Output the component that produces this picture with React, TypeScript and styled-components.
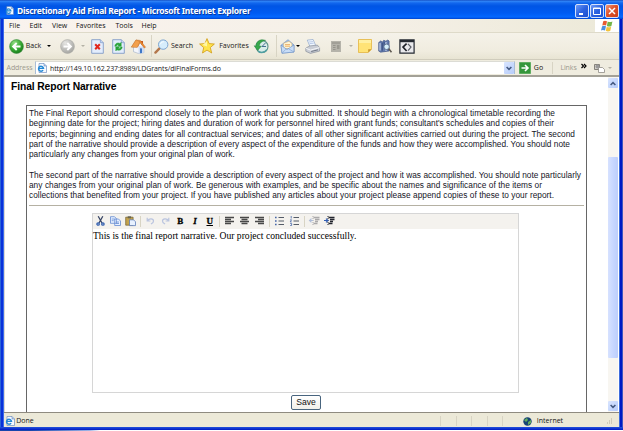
import React from "react";
import styled, { createGlobalStyle } from "styled-components";

const Global = createGlobalStyle`
  * { box-sizing: border-box; }
  body { margin: 0; overflow: hidden; background: #fff; }
  svg { display: block; flex: none; overflow: visible; }
`;

const ui = `"Open Sans", "Noto Sans", sans-serif`;

const Page = styled.div`
  width: 623px;
  height: 431px;
  display: flex;
  flex-direction: column;
  background: linear-gradient(90deg, #1746ad 0 30px, #9eb6e8 90px, #fff 100px);
`;
const Win = styled.div`
  height: 430px;
  display: flex;
  flex-direction: column;
  background: linear-gradient(90deg, #2a62d8 0 1px, #0831d9 1px 3px, #3b6be8 3px 4px, #ece9d8 4px 619px, #3d6cdd 619px 620px, #0019c4 620px 622px, #4055c0 622px);
`;
const TitleBar = styled.div`
  height: 19px;
  flex: none;
  display: flex;
  align-items: center;
  padding: 2px 4px 0 5px;
  background: linear-gradient(#0b3fb5 0, #3488f8 1px, #1267ee 3px, #0055e5 6px, #005bf2 13px, #0468ff 17px, #0043cf 19px);
`;
const Title = styled.div`
  flex: 1;
  margin-left: 3px;
  white-space: nowrap;
  color: #fff;
  font: 700 8.5px/14px "Noto Sans", "Open Sans", sans-serif;
  letter-spacing: -0.27px;
  text-shadow: 1px 1px 0 #0a3a9c;
`;
const WinButton = styled.div<{ $close?: boolean }>`
  width: 14px;
  height: 14px;
  margin-left: 1px;
  border: 1px solid #d5e1fb;
  border-radius: 2px;
  background: ${(p) =>
    p.$close
      ? "linear-gradient(135deg, #ee9a7c, #e0522b 45%, #c8401c)"
      : "linear-gradient(135deg, #6d9af5, #2c62e0 50%, #1c4fd0)"};
`;
const MenuBar = styled.div`
  height: 14px;
  flex: none;
  display: flex;
  margin: 0 4px;
  background: linear-gradient(90deg, #f9f3ee, #f5f0e7 60%, #ece9d8);
  border-bottom: 1px solid #dedac9;
`;
const MenuItem = styled.div<{ $w: number; $ls?: number }>`
  width: ${(p) => p.$w}px;
  font: 7px/14px ${ui};
  letter-spacing: ${(p) => p.$ls ?? 0}px;
  color: #111;
  white-space: nowrap;
`;
const Brand = styled.div`
  width: 24px;
  margin-left: auto;
  display: flex;
  align-items: center;
  justify-content: center;
  background: #fff;
`;
const Toolbar = styled.div`
  height: 27px;
  flex: none;
  display: flex;
  align-items: center;
  margin: 0 4px;
  background: linear-gradient(#f5f2e9, #f0ecdf 70%, #e8e4d3);
  border-bottom: 1px solid #d0ccbc;
`;
const Slot = styled.div<{ $w: number; $ls?: number; $dim?: boolean }>`
  width: ${(p) => p.$w}px;
  height: 100%;
  flex: none;
  display: flex;
  align-items: center;
  justify-content: center;
  font: 7px/14px ${ui};
  letter-spacing: ${(p) => p.$ls ?? 0}px;
  color: ${(p) => (p.$dim ? "#9c998d" : "#151515")};
  white-space: nowrap;
`;
const Rule = styled.i<{ $h: number }>`
  width: 1px;
  height: ${(p) => p.$h}px;
  background: #d8d4c4;
`;
const AddressBar = styled.div`
  height: 15px;
  flex: none;
  display: flex;
  align-items: center;
  margin: 0 4px;
  background: #efecdf;
`;
const AddressField = styled.div`
  width: 480px;
  height: 13px;
  display: flex;
  align-items: center;
  border: 1px solid #a9bdd6;
  border-top-color: #dcdcd5;
  border-bottom: 0;
  background: #fff;
  padding-left: 1px;
`;
const Url = styled.div`
  flex: 1;
  margin-left: 3px;
  font: 7px/13px ${ui};
  letter-spacing: -0.1px;
  color: #181818;
  white-space: nowrap;
`;
const Chevron = styled.div<{ $w: number; $h: number }>`
  width: ${(p) => p.$w}px;
  height: ${(p) => p.$h}px;
  flex: none;
  display: flex;
  align-items: center;
  justify-content: center;
  border-radius: 1px;
  background: linear-gradient(135deg, #d9e5ff, #b6ccfa);
`;
const View = styled.div`
  height: 338px;
  flex: none;
  display: flex;
  margin: 0 4px;
  border-top: 2px solid #a3a197;
  border-bottom: 1px solid #8f8b80;
  background: #fff;
`;
const Content = styled.div`
  width: 604px;
  height: 335px;
  overflow: hidden;
  border-left: 1px solid #dcdad2;
`;
const Heading = styled.h1`
  margin: 2px 0 0 6px;
  height: 26px;
  font: 700 10.3px/15px "Liberation Sans", Arial, sans-serif;
  letter-spacing: -0.1px;
  color: #000;
  white-space: nowrap;
`;
const Panel = styled.section`
  width: 561px;
  height: 320px;
  margin-left: 21px;
  padding: 2px 2px 0;
  border: 1px solid #666;
  border-bottom: 0;
  display: flex;
  flex-direction: column;
`;
const Paragraph = styled.p`
  margin: 0 0 10.3px;
`;
const Line = styled.span<{ $w: number }>`
  display: block;
  width: ${(p) => p.$w}px;
  height: 10.27px;
  font: 8.3px/10.27px "Liberation Sans", Arial, sans-serif;
  letter-spacing: 0.01px;
  text-align-last: justify;
  white-space: nowrap;
  color: #15151f;
`;
const Divider = styled.hr`
  width: 555px;
  height: 1px;
  margin: -6px 0 7px;
  border: 0;
  background: #b5b1a3;
  flex: none;
`;
const Editor = styled.div`
  width: 427px;
  height: 180px;
  flex: none;
  margin-left: 63px;
  border: 1px solid #d6d6d6;
`;
const EditorBar = styled.div`
  height: 15px;
  display: flex;
  align-items: center;
  background: #f4f2ee;
`;
const Style = styled.div<{ $kind: "b" | "i" | "u" }>`
  width: 14.7px;
  text-align: center;
  font: 700 9px/13px "Liberation Serif", serif;
  font-style: ${(p) => (p.$kind === "i" ? "italic" : "normal")};
  text-decoration: ${(p) => (p.$kind === "u" ? "underline" : "none")};
  color: #000;
  -webkit-text-stroke: 0.3px #000;
`;
const EditorText = styled.div`
  width: 262px;
  font: 9.6px/13px "Liberation Serif", serif;
  text-align-last: justify;
  white-space: nowrap;
  color: #000;
`;
const Save = styled.button`
  width: 30px;
  height: 15px;
  flex: none;
  margin: 2px 0 0 262px;
  padding: 0;
  border: 1px solid #48647e;
  border-radius: 2px;
  background: linear-gradient(#fff, #f1f0ea);
  font: 8.6px/12px "Liberation Sans", Arial, sans-serif;
  color: #111;
`;
const Scrollbar = styled.div`
  width: 10px;
  display: flex;
  flex-direction: column;
  padding: 1px 0;
  background: #f8f6f1;
`;
const Thumb = styled.div`
  height: 202px;
  margin: 69px 0 43px;
  border-radius: 1px;
  background: linear-gradient(90deg, #d7e2ff, #c5d5ff 60%, #bdcefa);
`;
const Status = styled.div`
  height: 14px;
  flex: none;
  display: flex;
  align-items: center;
  margin: 0 4px;
  padding-top: 2px;
  background: #ece9d8;
`;
const BottomEdge = styled.div`
  height: 3px;
  background: linear-gradient(#2354dc, #0019c4);
`;

const PageIcon = ({ s = 10 }: { s?: number }) => (
  <svg width={s} height={s} viewBox="0 0 10 10">
    <path d="M2 .5h5L9.5 3v6.5H2z" fill="#f5f9ff" stroke="#5c7db5" strokeWidth=".6" />
    <path d="M7 .5V3h2.5" fill="#b6cdec" stroke="#5c7db5" strokeWidth=".5" />
    <path d="M6.1 7.1A2.5 2.5 0 1 1 6.5 5.4H1.8" fill="none" stroke="#2388d6" strokeWidth="1.4" />
  </svg>
);
const Down = ({ dim }: { dim?: boolean }) => (
  <svg width="4" height="2" viewBox="0 0 4 2"><path d="M0 0h4L2 2z" fill={dim ? "#b4b1a6" : "#000"} /></svg>
);
const Ball = ({ dim }: { dim?: boolean }) => (
  <svg width="15" height="15" viewBox="0 0 15 15">
    <defs>
      <radialGradient id={dim ? "ballDim" : "ball"} cx=".35" cy=".25" r=".8">
        <stop offset="0" stopColor={dim ? "#e6e6e4" : "#91dc83"} />
        <stop offset=".6" stopColor={dim ? "#bcbcb9" : "#36a832"} />
        <stop offset="1" stopColor={dim ? "#a4a4a0" : "#177a1a"} />
      </radialGradient>
    </defs>
    <circle cx="7.5" cy="7.5" r="6.9" fill={`url(#${dim ? "ballDim" : "ball"})`} stroke={dim ? "#aaa9a4" : "#39883b"} strokeWidth=".6" />
    <path d={dim ? "M3.5 7.5h7M7.3 4l3.6 3.5L7.3 11" : "M11.5 7.5h-7M7.7 4L4.1 7.5 7.7 11"} fill="none" stroke="#fff" strokeWidth="1.9" />
  </svg>
);
const DocIcon = ({ stop }: { stop?: boolean }) => (
  <svg width="13" height="15" viewBox="0 0 13 15">
    <path d="M.7.7h8.6l3 3v10.6H.7z" fill="#e3edfd" stroke="#7591c1" strokeWidth=".8" />
    <path d="M9.3.7v3h3" fill="#c4d6f2" stroke="#7591c1" strokeWidth=".6" />
    {stop ? (
      <path d="M4.2 5.2l4.6 5M8.8 5.2l-4.6 5" stroke="#e2261c" strokeWidth="2" />
    ) : (
      <g fill="#27a336" stroke="#27a336" strokeWidth=".5">
        <path d="M2.8 7.3C3 4.4 5.8 3.2 8 4.5L9.2 3.3v4H5.4l1.4-1.4C5.3 5.2 4.5 6 4.4 7.3z" />
        <path d="M10.2 7.9c-.2 2.9-3 4.1-5.2 2.8l-1.2 1.2v-4h3.8L6.2 9.3c1.5.7 2.3-.1 2.4-1.4z" />
      </g>
    )}
  </svg>
);
const HomeIcon = () => (
  <svg width="15" height="15" viewBox="0 0 15 15">
    <path d="M10 2h2v4h-2z" fill="#c75c25" />
    <path d="M2.5 7l5-4.8L12.8 8v5.7l-5.3.8-5-1.8z" fill="#f4f6fc" stroke="#8fa0bd" strokeWidth=".5" />
    <path d="M7.5 7l5.3 1v5.7l-5.3.8z" fill="#cfdcf2" />
    <path d="M.4 8.1L5 .9l4.4.5 5.2 6.8-1.4.8L9 3.4 7 7.6z" fill="#f18c2c" stroke="#b85e1d" strokeWidth=".4" />
    <path d="M.4 8.1L5 .9 9 2.7 6.2 8.6z" fill="#f3a04c" stroke="#b9773c" strokeWidth=".4" />
    <path d="M9 9.3l2 .2v4.5l-2 .2z" fill="#3e78c7" />
  </svg>
);
const SearchIcon = () => (
  <svg width="15" height="15" viewBox="0 0 15 15">
    <path d="M6 8.8L1.4 13.6" stroke="#b3774c" strokeWidth="2.4" strokeLinecap="round" />
    <circle cx="9.2" cy="5.6" r="4.7" fill="#d6edfc" stroke="#7da5d0" />
    <path d="M6.5 5.2c.3-1.6 1.7-2.5 3.3-2.4" stroke="#fff" fill="none" />
  </svg>
);
const StarIcon = () => (
  <svg width="16" height="16" viewBox="0 0 16 16">
    <path d="M8 .6l2.1 5 5.3.4-4.1 3.5 1.4 5.5L8 12.1 3.5 15l1.2-5.4L.6 6l5.3-.4z" fill="#ffe44b" stroke="#d19a17" strokeWidth=".8" />
    <path d="M8 3v5.6L3.5 7" fill="#fff6a5" />
  </svg>
);
const HistoryIcon = () => (
  <svg width="15" height="15" viewBox="0 0 15 15">
    <circle cx="8" cy="7.5" r="6" fill="#d9ede9" stroke="#5d9389" strokeWidth="1.1" />
    <path d="M8 7.5l3.6-3.7M8 7.5h4" stroke="#456f91" strokeWidth="1" />
    <path d="M11.7 1.4C6.7-.7 2 2 2.1 7L0 6.8l3.7 4.6 3.7-4.2-2.1-.1c.1-2.9 2.6-5.2 6.4-5.7z" fill="#37a84a" stroke="#1d7637" strokeWidth=".4" />
    <path d="M4 12.1c3 2.5 7.2 1.3 8.8-1.5" fill="none" stroke="#4f9fa2" strokeWidth="1.5" />
  </svg>
);
const MailIcon = () => (
  <svg width="15" height="15" viewBox="0 0 15 15">
    <path d="M1 6.2L8 .7 14 6v7L2 14.2z" fill="#9ec0ec" stroke="#6b8ec2" strokeWidth=".6" />
    <path d="M3.6 4.2L9 2.3l2.8 2.2.2 5H3.7z" fill="#fff6d6" stroke="#d7aa64" strokeWidth=".5" />
    <path d="M5 5.6h5M5 7.2h5" stroke="#e8a04c" strokeWidth=".8" />
    <path d="M1 6.2l6 4.3L14 6v7L2 14.2z" fill="#c8ddf7" stroke="#6b8ec2" strokeWidth=".6" />
    <path d="M2 14.2l4-4.1M14 13L8.5 9.8" stroke="#7c9dcc" strokeWidth=".6" />
  </svg>
);
const PrintIcon = () => (
  <svg width="15" height="15" viewBox="0 0 15 15">
    <path d="M2.3 1.1l5.8-.6 3 6.9-5.8 1z" fill="#eff6ff" stroke="#7d99c3" strokeWidth=".6" />
    <path d="M.8 9.1l4-2.2 7.6-.8 2.2 2.5v3.5l-9.2 2.3L.8 12.3z" fill="#c9cdd5" stroke="#7c838f" strokeWidth=".6" />
    <path d="M.8 9.1l4.6 2 9.2-2.5" fill="none" stroke="#fff" strokeWidth=".8" />
    <path d="M6.2 12.5l6.8-1.7" stroke="#707784" />
    <path d="M4 3l4-.4M4.7 4.6l4-.4" stroke="#a3b8db" strokeWidth=".7" />
  </svg>
);
const EditIcon = () => (
  <svg width="10" height="11" viewBox="0 0 10 11">
    <path d="M0 0h10v11H0z" fill="#b5b3aa" />
    <path d="M1 2h8" stroke="#8e8c84" />
    <path d="M2 4.5h2.5M2 6.5h2.5M2 8.5h2.5" stroke="#8e8c84" strokeWidth=".8" />
    <path d="M6 4h2.5v4H6z" fill="#9b9990" />
  </svg>
);
const NoteIcon = () => (
  <svg width="14" height="14" viewBox="0 0 14 14">
    <path d="M.5.5h13v9.7l-3.3 3.3H.5z" fill="#ffe376" stroke="#e3b543" strokeWidth=".8" />
    <path d="M13.5 10.2h-3.3v3.3z" fill="#cb972e" />
    <path d="M1 1h12v3H1z" fill="#fff0a3" />
  </svg>
);
const BooksIcon = () => (
  <svg width="14" height="14" viewBox="0 0 14 14">
    <path d="M.7 3.5L3 1.8l1.3 1.4 1.5-2 2 1 2-1.2 1.3 1v10l-8.5 1.2-1.9-1.1z" fill="#647cae" stroke="#344a7e" strokeWidth=".6" />
    <path d="M2 4v7.5M8 3v9" stroke="#d4dff4" />
    <path d="M4.2 3.7v8M6.1 2.7v4" stroke="#263b6c" strokeWidth=".8" />
    <path d="M10.5 9.5l3 3.8" stroke="#5f5a52" strokeWidth="1.6" />
    <circle cx="8.6" cy="7.8" r="2.7" fill="#d5effa" stroke="#465677" strokeWidth=".7" />
  </svg>
);
const DevIcon = () => (
  <svg width="16" height="15" viewBox="0 0 16 15">
    <path d="M.9.9h14.2v13.2H.9z" fill="#e9e9ec" stroke="#252a32" strokeWidth="1.2" />
    <path d="M1 1h14v2.2H1z" fill="#252a32" />
    <path d="M7.6 4.6L4 8.1l3.6 3.9" fill="none" stroke="#1d2028" strokeWidth="1.6" />
    <path d="M9 4.8l3 3.3-3 3.5" fill="none" stroke="#5b5f68" strokeWidth="1.2" />
  </svg>
);
const FlagIcon = () => (
  <svg width="12" height="12" viewBox="0 0 12 12">
    <path d="M2.2 1.2Q4 .1 6 1.3L5.1 5.5Q3.1 4.4 1.3 5.5z" fill="#e75b31" />
    <path d="M6.7 1.6q2 1 4.7 0l-1 4.3q-2.2 1-4.5 0z" fill="#74b547" />
    <path d="M1.1 6.3q2-1.1 3.9 0l-1 4.3Q2 9.5 0 10.5z" fill="#4c8fe0" />
    <path d="M5.7 6.7q2 1.2 4.5.1l-1 4.1q-2.4 1-4.4-.1z" fill="#f2c33c" />
  </svg>
);
const Arrow = ({ up }: { up?: boolean }) => (
  <svg width="6" height="5" viewBox="0 0 6 5">
    <path d={up ? "M.6 4L3 1.6 5.4 4" : "M.6 1L3 3.4 5.4 1"} fill="none" stroke="#43587f" strokeWidth="1.5" />
  </svg>
);
const GlyphIcon = ({ kind }: { kind: string }) => (
  <svg width="11" height="10" viewBox="0 0 11 10">
    {kind === "cut" && (
      <g fill="none" stroke="#315eaf">
        <path d="M3.2.3L7 7M7.8.3L4 7" stroke="#374565" strokeWidth="1.3" />
        <circle cx="3.1" cy="8" r="1.2" strokeWidth="1.3" /><circle cx="7.9" cy="8" r="1.2" strokeWidth="1.3" />
      </g>
    )}
    {kind === "copy" && (
      <g fill="#e6f0ff" stroke="#648bd2" strokeWidth=".8">
        <path d="M.5.7h4l1.8 1.8v4.8H.5zM4.7 3h3.8l2 2v4.5H4.7z" /><path d="M1.7 3h3M1.7 4.7h2M6 6h3M6 7.5h3" />
      </g>
    )}
    {kind === "paste" && (
      <g>
        <path d="M.7 1.2h7.4v8H.7z" fill="#c4a34e" stroke="#70602e" strokeWidth=".7" />
        <path d="M2.7.3h3.4v2H2.7z" fill="#67634e" />
        <path d="M4.5 3.8h4l2 2v3.8h-6z" fill="#e8f1ff" stroke="#4c70b3" strokeWidth=".7" />
      </g>
    )}
    {(kind === "undo" || kind === "redo") && (
      <path transform={kind === "redo" ? "matrix(-1 0 0 1 11 0)" : undefined} d="M2.2 1.8v3.2h3.2M2.5 4.7c1.7-2.6 5.9-2.2 6 .3.1 1.7-1.6 2.5-2.6 3" fill="none" stroke="#bac4df" strokeWidth="1.2" />
    )}
    {["left", "center", "right"].includes(kind) && (
      <path
        d={kind === "left" ? "M1 1.5h9M1 3.5h6M1 5.5h9M1 7.5h6" : kind === "center" ? "M1 1.5h9M2.5 3.5h6M1 5.5h9M2.5 7.5h6" : "M1 1.5h9M4 3.5h6M1 5.5h9M4 7.5h6"}
        stroke="#484848" strokeWidth="1.4"
      />
    )}
    {(kind === "ul" || kind === "ol") && (
      <g>
        <path d="M4.5 1.5H10M4.5 5H10M4.5 8.5H10" stroke="#555c68" />
        <path d={kind === "ul" ? "M1 1.5h1.6M1 5h1.6M1 8.5h1.6" : "M2.2 0v2.5M1.2 3.8h1.3L1.2 5.9h1.5M1.2 7.5h1.4v2H1.2"} fill="none" stroke="#4566a8" strokeWidth={kind === "ul" ? 1.6 : 0.8} />
      </g>
    )}
    {(kind === "out" || kind === "in") && (
      <g opacity={kind === "out" ? 0.35 : 1} fill="none">
        <path d="M4.5 1.5h6M6 3.5h4.5M6 5.5h3M4.5 7.5h4" stroke="#22252e" strokeWidth="1.3" />
        <path d="M4 0v9.5" stroke="#22252e" strokeDasharray="1 1" />
        <path d={kind === "in" ? "M0 4.5h3.5M2 2.6l2 1.9-2 1.9" : "M4 4.5H.8M2.5 2.6l-2 1.9 2 1.9"} stroke="#315db3" strokeWidth="1.1" />
      </g>
    )}
  </svg>
);

const first: [string, number][] = [
  ["The Final Report should correspond closely to the plan of work that you submitted. It should begin with a chronological timetable recording the", 526],
  ["beginning date for the project; hiring dates and duration of work for personnel hired with grant funds; consultant's schedules and copies of their", 525],
  ["reports; beginning and ending dates for all contractual services; and dates of all other significant activities carried out during the project. The second", 546],
  ["part of the narrative should provide a description of every aspect of the expenditure of the funds and how they were accomplished. You should note", 541],
  ["particularly any changes from your original plan of work.", 205.5],
];
const second: [string, number][] = [
  ["The second part of the narrative should provide a description of every aspect of the project and how it was accomplished. You should note particularly", 552],
  ["any changes from your original plan of work. Be generous with examples, and be specific about the names and significance of the items or", 513],
  ["collections that benefited from your project. If you have published any articles about your project please append copies of these to your report.", 525],
];

export default function App() {
  return (
    <Page>
      <Global />
      <Win>
        <TitleBar>
          <PageIcon s={9} />
          <Title>Discretionary Aid Final Report - Microsoft Internet Explorer</Title>
          <WinButton><svg width="12" height="12"><path d="M3 9h4" stroke="#fff" strokeWidth="2" /></svg></WinButton>
          <WinButton><svg width="12" height="12"><path d="M2.5 3h7v6.5h-7zM2.5 3.5h7" fill="none" stroke="#fff" /></svg></WinButton>
          <WinButton $close><svg width="12" height="12"><path d="M3 3l6 6M9 3L3 9" stroke="#fff" strokeWidth="1.5" /></svg></WinButton>
        </TitleBar>
        <MenuBar>
          <MenuItem $w={5} />
          <MenuItem $w={20.5}>File</MenuItem>
          <MenuItem $w={22.5}>Edit</MenuItem>
          <MenuItem $w={24}>View</MenuItem>
          <MenuItem $w={39.5}>Favorites</MenuItem>
          <MenuItem $w={26}>Tools</MenuItem>
          <MenuItem $w={20}>Help</MenuItem>
          <Brand><FlagIcon /></Brand>
        </MenuBar>
        <Toolbar>
          <Slot $w={4} />
          <Slot $w={16}><Ball /></Slot>
          <Slot $w={19}>Back</Slot>
          <Slot $w={12}><Down /></Slot>
          <Slot $w={24}><Ball dim /></Slot>
          <Slot $w={7}><Down dim /></Slot>
          <Slot $w={23}><DocIcon stop /></Slot>
          <Slot $w={18}><DocIcon /></Slot>
          <Slot $w={22}><HomeIcon /></Slot>
          <Slot $w={4}><Rule $h={22} /></Slot>
          <Slot $w={17}><SearchIcon /></Slot>
          <Slot $w={24}>Search</Slot>
          <Slot $w={25}><StarIcon /></Slot>
          <Slot $w={30}>Favorites</Slot>
          <Slot $w={25}><HistoryIcon /></Slot>
          <Slot $w={4}><Rule $h={22} /></Slot>
          <Slot $w={18}><MailIcon /></Slot>
          <Slot $w={4}><Down /></Slot>
          <Slot $w={24}><PrintIcon /></Slot>
          <Slot $w={23}><EditIcon /></Slot>
          <Slot $w={7}><Down dim /></Slot>
          <Slot $w={21}><NoteIcon /></Slot>
          <Slot $w={20}><BooksIcon /></Slot>
          <Slot $w={24}><DevIcon /></Slot>
        </Toolbar>
        <AddressBar>
          <Slot $w={31} $ls={-0.1} $dim>Address</Slot>
          <AddressField>
            <PageIcon />
            <Url>http://149.10.162.237:8989/LDGrants/diFinalForms.do</Url>
            <Chevron $w={10} $h={12}><Arrow /></Chevron>
          </AddressField>
          <Slot $w={20}>
            <svg width="12" height="12">
              <path d="M.5.5h11v11H.5z" fill="#35963c" stroke="#5fac60" />
              <path d="M2.5 6h6M6 3l3 3-3 3" fill="none" stroke="#fff" strokeWidth="1.6" />
            </svg>
          </Slot>
          <Slot $w={7}>Go</Slot>
          <Slot $w={21}><Rule $h={12} /></Slot>
          <Slot $w={11} $ls={-0.1} $dim>Links</Slot>
          <Slot $w={20}>
            <svg width="6" height="10"><path d="M.5 1l2 2-2 2M3 1l2 2-2 2" fill="none" stroke="#000" strokeWidth="1.2" /></svg>
          </Slot>
          <Slot $w={10}>
            <svg width="11" height="10">
              <path d="M.5 1.5h5v5h-5z" fill="#d2d0cb" stroke="#85827b" />
              <path d="M4.5 4.5h4l2 2v3h-6z" fill="#fff" stroke="#8f8d86" strokeWidth=".8" />
              <circle cx="3.5" cy="3.5" r="2" fill="#999" />
            </svg>
          </Slot>
          <Slot $w={12}><Down dim /></Slot>
        </AddressBar>
        <View>
          <Content>
            <Heading>Final Report Narrative</Heading>
            <Panel>
              <Paragraph>{first.map(([t, w]) => <Line key={t} $w={w}>{t}</Line>)}</Paragraph>
              <Paragraph>{second.map(([t, w]) => <Line key={t} $w={w}>{t}</Line>)}</Paragraph>
              <Divider />
              <Editor>
                <EditorBar>
                  {["cut", "copy", "paste"].map((k) => <Slot key={k} $w={15}><GlyphIcon kind={k} /></Slot>)}
                  <Slot $w={5}><Rule $h={11} /></Slot>
                  {["undo", "redo"].map((k) => <Slot key={k} $w={15}><GlyphIcon kind={k} /></Slot>)}
                  <Style $kind="b">B</Style><Style $kind="i">I</Style><Style $kind="u">U</Style>
                  <Slot $w={5}><Rule $h={11} /></Slot>
                  {["left", "center", "right"].map((k) => <Slot key={k} $w={15}><GlyphIcon kind={k} /></Slot>)}
                  <Slot $w={5}><Rule $h={11} /></Slot>
                  {["ul", "ol"].map((k) => <Slot key={k} $w={15}><GlyphIcon kind={k} /></Slot>)}
                  <Slot $w={5}><Rule $h={11} /></Slot>
                  {["out", "in"].map((k) => <Slot key={k} $w={15}><GlyphIcon kind={k} /></Slot>)}
                </EditorBar>
                <EditorText>This is the final report narrative. Our project concluded successfully.</EditorText>
              </Editor>
              <Save>Save</Save>
            </Panel>
          </Content>
          <Scrollbar>
            <Chevron $w={10} $h={10}><Arrow up /></Chevron>
            <Thumb />
            <Chevron $w={10} $h={10}><Arrow /></Chevron>
          </Scrollbar>
        </View>
        <Status>
          <Slot $w={11}><PageIcon /></Slot>
          <Slot $w={20}>Done</Slot>
          <Slot $w={398} />
          {[0, 1, 2, 3, 4].map((i) => <Slot key={i} $w={15.5}><Rule $h={10} /></Slot>)}
          <Slot $w={8} />
          <Slot $w={18}>
            <svg width="9" height="9">
              <circle cx="4.5" cy="4.5" r="4.2" fill="#164375" />
              <path d="M1 3l3-2 1 2-2 2zM5 5l3-2v3L5 8z" fill="#62ad5c" />
            </svg>
          </Slot>
          <Slot $w={27}>Internet</Slot>
          <Slot $w={37} />
          <Slot $w={18}><svg width="6" height="7"><path d="M4 1h1M2 3h1M4 3h1M0 5h1M2 5h1M4 5h1" stroke="#b2ae9c" /></svg></Slot>
        </Status>
        <BottomEdge />
      </Win>
    </Page>
  );
}
